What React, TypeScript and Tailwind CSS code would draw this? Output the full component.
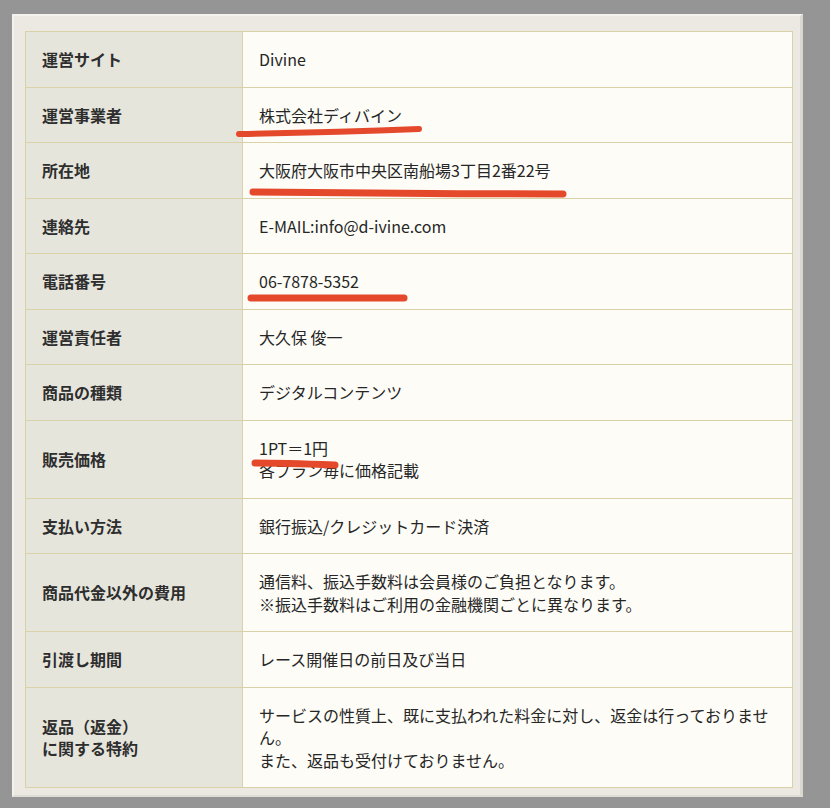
import type { ReactNode } from "react";

type Mark = {
  d: string;
  w: number;
};

interface Row {
  label: ReactNode;
  value: ReactNode;
  mark?: Mark;
}

const rows: Row[] = [
  { label: "運営サイト", value: "Divine" },
  {
    label: "運営事業者",
    value: "株式会社ディバイン",
    mark: { d: "M-20 30 C 40 29, 110 27, 160 25", w: 6 },
  },
  {
    label: "所在地",
    value: "大阪府大阪市中央区南船場3丁目2番22号",
    mark: { d: "M-6 33 C 80 34, 200 35, 304 35", w: 7 },
  },
  { label: "連絡先", value: "E-MAIL:info@d-ivine.com" },
  {
    label: "電話番号",
    value: "06-7878-5352",
    mark: { d: "M-8 28 C 40 28, 100 28, 145 28", w: 7 },
  },
  { label: "運営責任者", value: "大久保 俊一" },
  { label: "商品の種類", value: "デジタルコンテンツ" },
  {
    label: "販売価格",
    value: (
      <>
        1PT＝1円
        <br />
        各プラン毎に価格記載
      </>
    ),
    mark: { d: "M-4 26 C 20 26, 50 27, 76 28", w: 7 },
  },
  { label: "支払い方法", value: "銀行振込/クレジットカード決済" },
  {
    label: "商品代金以外の費用",
    value: (
      <>
        通信料、振込手数料は会員様のご負担となります。
        <br />
        ※振込手数料はご利用の金融機関ごとに異なります。
      </>
    ),
  },
  { label: "引渡し期間", value: "レース開催日の前日及び当日" },
  {
    label: (
      <>
        返品（返金）
        <br />
        に関する特約
      </>
    ),
    value: (
      <>
        サービスの性質上、既に支払われた料金に対し、返金は行っておりません。
        <br />
        また、返品も受付けておりません。
      </>
    ),
  },
];

function Underline({ mark }: { mark: Mark }) {
  return (
    <svg
      className="pointer-events-none absolute left-0 top-0 overflow-visible"
      width="1"
      height="1"
    >
      <path
        d={mark.d}
        fill="none"
        stroke="#e5492b"
        strokeWidth={mark.w}
        strokeLinecap="round"
      />
    </svg>
  );
}

export default function App() {
  return (
    <div className="h-[808px] w-[830px] bg-[#959595] pl-[12px] pt-[14px] font-['Noto_Sans_CJK_JP','Noto_Sans',sans-serif]">
      <div className="h-[783px] w-[791px] border-l-2 border-t-2 border-[#f4f2ec] border-r-[3px] border-r-[#d9d7d0] border-b-2 border-b-[#dedcd4] bg-[#ebe9e1] pl-[11px] pt-[15px]">
        <div className="w-[768px] border border-[#d9d1a7] text-[16px] leading-[22.5px]">
          {rows.map((row, i) => (
            <div
              key={i}
              className={`flex ${i > 0 ? "border-t border-[#d9d1a7]" : ""}`}
            >
              <div className="flex w-[217px] shrink-0 items-center border-r border-[#d9d1a7] bg-[#e6e5dc] px-4 py-4 font-bold text-[#2e2e2e]">
                <div>{row.label}</div>
              </div>
              <div className="flex-1 bg-[#fdfcf6] px-4 py-4 text-[#262626]">
                <div className="relative">
                  {row.value}
                  {row.mark && <Underline mark={row.mark} />}
                </div>
              </div>
            </div>
          ))}
        </div>
      </div>
    </div>
  );
}
